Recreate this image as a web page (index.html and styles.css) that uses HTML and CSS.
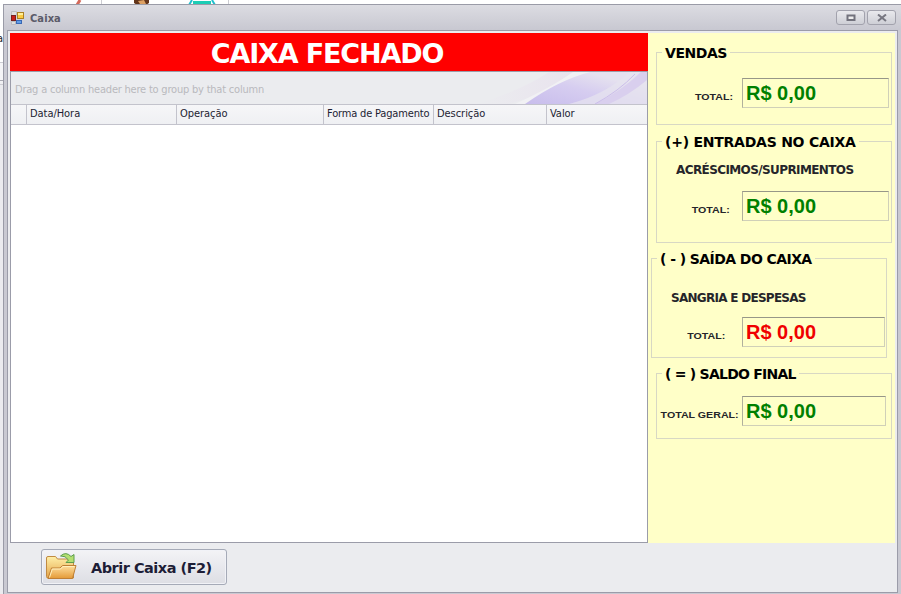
FILE: index.html
```html
<!DOCTYPE html>
<html lang="pt-BR">
<head>
<meta charset="utf-8">
<title>Caixa</title>
<link rel="stylesheet" href="styles.css">
</head>
<body>
<div class="backdrop">
  <svg width="901" height="594" viewBox="0 0 901 594">
    <path d="M80 0L77 5" stroke="#d4695a" stroke-width="3"/>
    <path d="M101.500 0V5M228.500 0V5M0 62.500H4M0 84.500H4" stroke="#ccccd2"/>
    <path d="M0 80.500H4" stroke="#a9a9b2"/>
    <path d="M134 0h15v3l-3 2h-9l-3-2z" fill="#63351a"/><path d="M138 1l6-1 2 4h-6z" fill="#dda062"/>
    <path d="M189 5l3-5M215 5l-3-5" stroke="#22bfd0" stroke-width="2"/><path d="M193 2.500h18" stroke="#1ccdb5" stroke-width="3"/>
  </svg>
  <span class="behind">a</span>
</div>
<main class="window">
  <header class="titlebar">
    <svg class="appicon" width="14" height="14" viewBox="0 0 14 14">
      <path d="M.5.5h5v4h-5zM.5 10.500h4v3h-4z" fill="#e0e0df" stroke="#bdbdc0"/>
      <rect x=".5" y="4.500" width="4" height="5" fill="#c8201b" stroke="#79201d"/>
      <rect x="6.500" y="1.500" width="6" height="6" fill="#fbcb42" stroke="#ad8122"/>
      <path d="M7 2h5v2H7z" fill="#fff09b"/>
      <rect x="5.500" y="9.500" width="5" height="3" fill="#619ee8" stroke="#3a68b5"/>
    </svg>
    <span class="title">Caixa</span>
    <span class="winbtn"><svg width="10" height="8" viewBox="0 0 10 8"><path d="M1.500 1.500h7v4.500h-7z" fill="#eee" stroke="#72727d" stroke-width="2"/></svg></span>
    <span class="winbtn close"><svg width="10" height="8" viewBox="0 0 10 8"><path d="M1 .5l8 6.500M9 .5l-8 6.500" stroke="#777781" stroke-width="2"/></svg></span>
  </header>
  <section class="client">
    <div class="content">
      <div class="left">
        <h1 class="status"><span>CAIXA FECHADO</span></h1>
        <div class="grid">
          <div class="group">
            <span>Drag a column header here to group by that column</span>
            <svg class="swirl" width="190" height="32" viewBox="0 0 190 32">
              <defs>
                <linearGradient id="w1"><stop offset="0" stop-color="#e9e0ee" stop-opacity="0"/><stop offset="1" stop-color="#e6daec"/></linearGradient>
                <linearGradient id="w2" x1="0" y1="1" x2="1" y2="0"><stop offset="0" stop-color="#c8bdec"/><stop offset=".45" stop-color="#d6cdf0"/><stop offset=".75" stop-color="#e5e1ef"/></linearGradient>
              </defs>
              <path d="M20 32Q65 18 92 0H132Q95 20 52 32z" fill="url(#w1)" opacity=".65"/>
              <path d="M58 32Q95 15 116 0H134Q98 16 72 32z" fill="#f1f1f4"/>
              <path d="M68 32Q102 8 133 0H190V32z" fill="url(#w2)"/>
              <path d="M112 32Q150 22 172 0H190V32z" fill="#e6e3ef" opacity=".75"/>
              <path d="M138 32Q163 20 184 0H190V8Q172 23 152 32z" fill="#d9cfee"/>
              <path d="M138 32Q162 19 178 2" fill="none" stroke="#cbbdea"/>
            </svg>
          </div>
          <div class="cols">
            <span></span><span>Data/Hora</span><span>Operação</span><span class="forma">Forma de Pagamento</span><span>Descrição</span><span>Valor</span>
          </div>
          <div class="rows"></div>
        </div>
      </div>
      <aside class="totals">
        <section class="box vendas">
          <h2>VENDAS</h2>
          <div class="line"><label>TOTAL:</label><output>R$ 0,00</output></div>
        </section>
        <section class="box entradas">
          <h2>(+) ENTRADAS NO CAIXA</h2>
          <h3>ACRÉSCIMOS/SUPRIMENTOS</h3>
          <div class="line"><label>TOTAL:</label><output>R$ 0,00</output></div>
        </section>
        <section class="box saida">
          <h2>( - ) SAÍDA DO CAIXA</h2>
          <h3>SANGRIA E DESPESAS</h3>
          <div class="line"><label>TOTAL:</label><output>R$ 0,00</output></div>
        </section>
        <section class="box saldo">
          <h2>( = ) SALDO FINAL</h2>
          <div class="line"><label>TOTAL GERAL:</label><output>R$ 0,00</output></div>
        </section>
      </aside>
    </div>
    <footer class="actions">
      <button class="open">
        <svg width="32" height="28" viewBox="0 0 32 28">
          <defs>
            <linearGradient id="fb" x2="0" y2="1"><stop stop-color="#fff0a9"/><stop offset="1" stop-color="#e4a348"/></linearGradient>
            <linearGradient id="ff" x2="0" y2="1"><stop stop-color="#ffe0a0"/><stop offset="1" stop-color="#e49a37"/></linearGradient>
          </defs>
          <path d="M.5 5q0-1.500 1.500-1.500H9.500l2 2.500H26q1.500 0 1.500 1.500V25H2Q.5 25 .5 23.500z" fill="url(#fb)" stroke="#c08a42"/>
          <path d="M2 25.500L5.500 15H14l2.500-2.500H30L26.500 25.500z" fill="url(#ff)" stroke="#bf7f35"/>
          <path d="M3.500 24.500L6.300 16H14.500l2.500-2.500h11.500" fill="none" stroke="#fff0bd"/>
          <path d="M14.500 3Q20-2 25 3.500l3-2V9.500h-8l2.500-2.500Q19.500 2.500 14.500 3z" fill="#b3df70" stroke="#5c9d4e"/>
        </svg>
        <span>Abrir Caixa (F2)</span>
      </button>
    </footer>
  </section>
</main>
</body>
</html>
```
FILE: styles.css
```css
* { box-sizing: border-box; }
body { margin: 0; width: 901px; height: 594px; overflow: hidden; background: #fff; position: relative; font-family: "DejaVu Sans Condensed", "DejaVu Sans", sans-serif; color: #1d1d32; }
h1, h2, h3 { margin: 0; white-space: nowrap; }
svg { display: block; flex: none; }
.backdrop { position: absolute; inset: 0; background: linear-gradient(#fff 0 62px, #f5f5f7 62px 80px, #ebebef 85px); }
.behind { position: absolute; left: -3px; top: 32px; font-size: 11px; color: #222; }
.window { position: relative; margin: 4px 0 0 3px; width: 898px; height: 590px; border: solid #9a9ba7; border-width: 1px 0 0 1px; background: #c9c9d2; padding: 0 4px 1px 3px; display: flex; flex-direction: column; }
.titlebar { height: 25px; flex: none; display: flex; align-items: center; margin: 0 -4px 0 -3px; padding: 0 5px 0 7px; background: linear-gradient(#dcdce2, #c8c8d1); }
.title { font: bold 11px "DejaVu Sans Condensed", sans-serif; letter-spacing: .1px; color: #5b5b69; margin: 1px auto 0 5px; }
.winbtn { width: 29px; height: 15px; border: 1px solid #a2a2ad; border-radius: 3px; background: linear-gradient(#e9e9ed, #cecfd6); display: flex; align-items: center; justify-content: center; }
.close { margin-left: 2px; }
.client { width: 891px; height: 563px; border: 1px solid #9b9ca9; background: #ebecef; padding: 2px 2px 0; display: flex; flex-direction: column; }
.content { height: 510px; display: flex; }
.left { width: 638px; display: flex; flex-direction: column; }
.status { height: 38px; background: #f00; color: #fff; display: flex; justify-content: center; padding: 3px 4px 0 0; align-items: center; font: bold 27px "DejaVu Sans", sans-serif; letter-spacing: -1.15px; }
.grid { flex: 1; border: 1px solid #9b9ca9; background: #fff; display: flex; flex-direction: column; }
.group { height: 33px; background: #ebecef; border-bottom: 1px solid #c3c3cc; display: flex; align-items: center; font-size: 11px; color: #b9b9bd; padding-left: 4px; white-space: nowrap; letter-spacing: -.21px; }
.group span { padding-top: 2px; }
.swirl { margin-left: auto; }
.cols { height: 20px; display: grid; grid-template-columns: 16px 150px 147px 110px 113px 1fr; border-bottom: 1px solid #c3c3cc; background: linear-gradient(#f6f6f8, #eff0f3); font-size: 11px; line-height: 18px; letter-spacing: -.05px; white-space: nowrap; }
.cols span { border-right: 1px solid #c3c3cc; padding-left: 3px; }
.cols .forma { letter-spacing: -.17px; }
.cols span:last-child { border-right: 0; }
.rows { flex: 1; }
.totals { width: 247px; background: #ffffc8; padding: 19px 0 0 8px; }
.box { position: relative; width: 236px; border: 1px solid #d8d8c4; }
.box h2 { position: absolute; left: 5px; top: -9px; padding: 0 3px; background: #ffffc8; color: #000; font: bold 14px/18px "DejaVu Sans", sans-serif; letter-spacing: -.45px; }
.box h3 { font: bold 12px/16px "DejaVu Sans", sans-serif; color: #25252a; }
.line { display: flex; height: 30px; }
.line label { width: 85px; padding: 13px 8px 0 0; text-align: right; font: bold 9.5px/12px "Liberation Sans", sans-serif; transform: scaleX(1.12); transform-origin: right; color: #25252a; white-space: nowrap; }
.line output { width: 147px; height: 30px; border: 1px solid #d0d0b8; border-top-color: #979788; border-left-color: #b0b09c; padding-left: 3px; font: bold 20px/28px "Liberation Sans", sans-serif; color: #008000; }
.vendas { height: 73px; padding-top: 25px; }
.vendas h2 { top: -9px; }
.entradas { height: 102px; margin-top: 16px; padding-top: 20px; }
.entradas h2 { letter-spacing: -.24px; }
.entradas h3 { padding-left: 19px; margin-bottom: 13px; letter-spacing: -.6px; }
.entradas label { padding-right: 11px; }
.saida { height: 100px; margin: 15px 0 15px -5px; padding-top: 31px; }
.saida h2 { letter-spacing: -.57px; }
.saida h3 { padding-left: 19px; margin-bottom: 11px; letter-spacing: -.72px; }
.saida label { width: 90px; padding-right: 15px; }
.saida output { width: 143px; color: #f00000; }
.saldo { height: 66px; padding-top: 22px; }
.saldo h2 { letter-spacing: -.76px; }
.saldo label { padding-right: 3px; }
.saldo output { width: 144px; }
.actions { padding: 6px 0 0 31px; }
.open { width: 186px; height: 36px; border: 1px solid #a5aab7; border-radius: 3px; background: linear-gradient(#f3f3f6, #dddee4); box-shadow: inset 0 0 0 1px #f1f2f7; padding: 0 0 0 4px; display: flex; align-items: center; font: bold 14.5px "DejaVu Sans", sans-serif; letter-spacing: -.5px; color: #1d1d36; white-space: nowrap; }
.open span { margin: 2px 0 0 13px; }
```
